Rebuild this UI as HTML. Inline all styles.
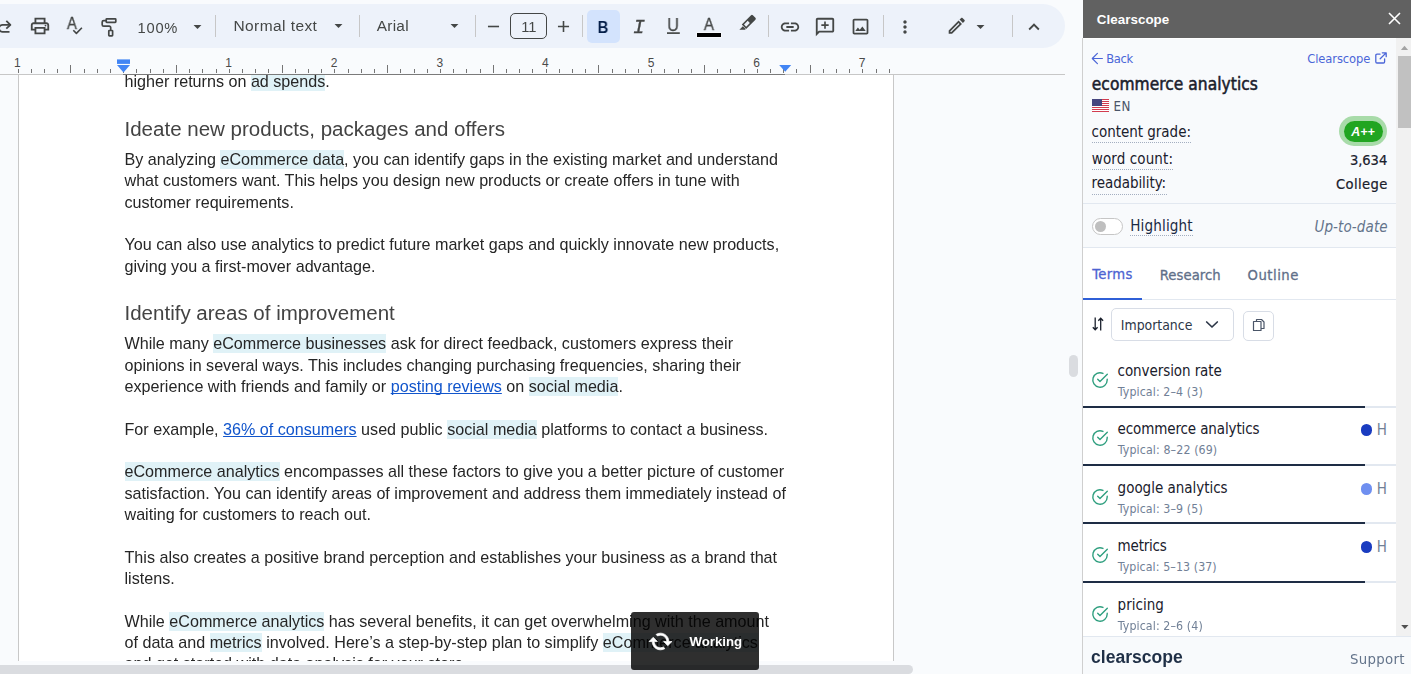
<!DOCTYPE html>
<html lang="en"><head><meta charset="utf-8"><title>Google Docs - Clearscope</title>
<style>
*{box-sizing:border-box;margin:0;padding:0}
html,body{width:1411px;height:674px;overflow:hidden;background:#f9fbfd}
body{position:relative;font-family:"Liberation Sans",Arial,sans-serif;color:#000}
.abs{position:absolute}
.t{position:absolute;white-space:nowrap;line-height:1}
#toolbar{position:absolute;left:-30px;top:4px;width:1095px;height:44px;background:#edf2fa;border-radius:22px}
.ic{position:absolute;width:22px;height:22px;fill:#444746}
.sep{position:absolute;top:15px;width:1px;height:22px;background:#c7c7c7}
.tb{position:absolute;white-space:nowrap;color:#444746;line-height:20px}
#page{position:absolute;left:18px;top:75px;width:876px;height:586px;background:#fff;border-left:1px solid #c8c8c8;border-right:1px solid #c8c8c8;overflow:hidden}
#doc{position:absolute;left:0;top:0;width:1083px;height:661px;overflow:hidden;will-change:transform}
.ln{position:absolute;left:124.500px;white-space:nowrap;font-size:16.14px;line-height:22px;height:22px;color:#262626;letter-spacing:0}
.hd{position:absolute;left:124.500px;white-space:nowrap;font-size:20.53px;line-height:28px;height:28px;color:#434343}
.hl{background:#e0f2f7;padding-bottom:1px}
.lk{color:#1155cc;text-decoration:underline;text-decoration-thickness:1px;text-underline-offset:1px;text-decoration-skip-ink:none}
#side{position:absolute;left:1083px;top:0;width:328px;height:674px;font-family:"DejaVu Sans Condensed","DejaVu Sans","Liberation Sans",sans-serif;font-stretch:condensed;color:#1a202c}
.bar{position:absolute;left:0;width:313px;height:2px;background:#e2e8f0}
.bar i{position:absolute;left:0;top:0;height:2px;width:282px;background:#1e2d45;display:block}
</style></head>
<body>
<div id="doc">
<div id="page"></div>
<div class="ln" style="top:70.00px">higher returns on <span class="hl">ad spends</span>.</div>
<div class="hd" style="top:115.00px">Ideate new products, packages and offers</div>
<div class="ln" style="top:148.00px">By analyzing <span class="hl">eCommerce data</span>, you can identify gaps in the existing market and understand</div>
<div class="ln" style="top:169.00px">what customers want. This helps you design new products or create offers in tune with</div>
<div class="ln" style="top:191.00px">customer requirements.</div>
<div class="ln" style="top:233.00px">You can also use analytics to predict future market gaps and quickly innovate new products,</div>
<div class="ln" style="top:255.00px">giving you a first-mover advantage.</div>
<div class="hd" style="top:299.00px">Identify areas of improvement</div>
<div class="ln" style="top:332.00px">While many <span class="hl">eCommerce businesses</span> ask for direct feedback, customers express their</div>
<div class="ln" style="top:354.00px">opinions in several ways. This includes changing purchasing frequencies, sharing their</div>
<div class="ln" style="top:375.00px">experience with friends and family or <span class="lk">posting reviews</span> on <span class="hl">social media</span>.</div>
<div class="ln" style="top:418.00px">For example, <span class="lk">36% of consumers</span> used public <span class="hl">social media</span> platforms to contact a business.</div>
<div class="ln" style="top:460.00px"><span class="hl">eCommerce analytics</span> encompasses all these factors to give you a better picture of customer</div>
<div class="ln" style="top:482.00px">satisfaction. You can identify areas of improvement and address them immediately instead of</div>
<div class="ln" style="top:503.00px">waiting for customers to reach out.</div>
<div class="ln" style="top:546.00px">This also creates a positive brand perception and establishes your business as a brand that</div>
<div class="ln" style="top:567.00px">listens.</div>
<div class="ln" style="top:610.00px">While <span class="hl">eCommerce analytics</span> has several benefits, it can get overwhelming with the amount</div>
<div class="ln" style="top:631.00px">of data and <span class="hl">metrics</span> involved. Here’s a step-by-step plan to simplify <span class="hl">eCommerce analytics</span></div>
<div class="ln" style="top:652.00px">and get started with data analysis for your store.</div>
</div>
<div class="abs" style="left:0;top:48px;width:1083px;height:27px;background:#f9fbfd"></div>
<svg class="abs" style="left:0;top:48px" width="1083" height="28" viewBox="0 0 1083 28" shape-rendering="crispEdges"><rect x="0" y="26" width="1065" height="1" fill="#c7c7c7"/><rect x="123" y="26" width="662" height="1" fill="#7a7a7a"/><rect x="18" y="21" width="1" height="4" fill="#757575"/><rect x="31" y="21" width="1" height="4" fill="#757575"/><rect x="44" y="21" width="1" height="4" fill="#757575"/><rect x="57" y="21" width="1" height="4" fill="#757575"/><rect x="70" y="17" width="1" height="8" fill="#757575"/><rect x="84" y="21" width="1" height="4" fill="#757575"/><rect x="97" y="21" width="1" height="4" fill="#757575"/><rect x="110" y="21" width="1" height="4" fill="#757575"/><rect x="123" y="21" width="1" height="4" fill="#757575"/><rect x="136" y="21" width="1" height="4" fill="#757575"/><rect x="150" y="21" width="1" height="4" fill="#757575"/><rect x="163" y="21" width="1" height="4" fill="#757575"/><rect x="176" y="17" width="1" height="8" fill="#757575"/><rect x="189" y="21" width="1" height="4" fill="#757575"/><rect x="202" y="21" width="1" height="4" fill="#757575"/><rect x="216" y="21" width="1" height="4" fill="#757575"/><rect x="229" y="21" width="1" height="4" fill="#757575"/><rect x="242" y="21" width="1" height="4" fill="#757575"/><rect x="255" y="21" width="1" height="4" fill="#757575"/><rect x="268" y="21" width="1" height="4" fill="#757575"/><rect x="282" y="17" width="1" height="8" fill="#757575"/><rect x="295" y="21" width="1" height="4" fill="#757575"/><rect x="308" y="21" width="1" height="4" fill="#757575"/><rect x="321" y="21" width="1" height="4" fill="#757575"/><rect x="334" y="21" width="1" height="4" fill="#757575"/><rect x="348" y="21" width="1" height="4" fill="#757575"/><rect x="361" y="21" width="1" height="4" fill="#757575"/><rect x="374" y="21" width="1" height="4" fill="#757575"/><rect x="387" y="17" width="1" height="8" fill="#757575"/><rect x="400" y="21" width="1" height="4" fill="#757575"/><rect x="414" y="21" width="1" height="4" fill="#757575"/><rect x="427" y="21" width="1" height="4" fill="#757575"/><rect x="440" y="21" width="1" height="4" fill="#757575"/><rect x="453" y="21" width="1" height="4" fill="#757575"/><rect x="466" y="21" width="1" height="4" fill="#757575"/><rect x="480" y="21" width="1" height="4" fill="#757575"/><rect x="493" y="17" width="1" height="8" fill="#757575"/><rect x="506" y="21" width="1" height="4" fill="#757575"/><rect x="519" y="21" width="1" height="4" fill="#757575"/><rect x="532" y="21" width="1" height="4" fill="#757575"/><rect x="546" y="21" width="1" height="4" fill="#757575"/><rect x="559" y="21" width="1" height="4" fill="#757575"/><rect x="572" y="21" width="1" height="4" fill="#757575"/><rect x="585" y="21" width="1" height="4" fill="#757575"/><rect x="598" y="17" width="1" height="8" fill="#757575"/><rect x="612" y="21" width="1" height="4" fill="#757575"/><rect x="625" y="21" width="1" height="4" fill="#757575"/><rect x="638" y="21" width="1" height="4" fill="#757575"/><rect x="651" y="21" width="1" height="4" fill="#757575"/><rect x="664" y="21" width="1" height="4" fill="#757575"/><rect x="678" y="21" width="1" height="4" fill="#757575"/><rect x="691" y="21" width="1" height="4" fill="#757575"/><rect x="704" y="17" width="1" height="8" fill="#757575"/><rect x="717" y="21" width="1" height="4" fill="#757575"/><rect x="730" y="21" width="1" height="4" fill="#757575"/><rect x="744" y="21" width="1" height="4" fill="#757575"/><rect x="757" y="21" width="1" height="4" fill="#757575"/><rect x="770" y="21" width="1" height="4" fill="#757575"/><rect x="783" y="21" width="1" height="4" fill="#757575"/><rect x="796" y="21" width="1" height="4" fill="#757575"/><rect x="810" y="17" width="1" height="8" fill="#757575"/><rect x="823" y="21" width="1" height="4" fill="#757575"/><rect x="836" y="21" width="1" height="4" fill="#757575"/><rect x="849" y="21" width="1" height="4" fill="#757575"/><rect x="862" y="21" width="1" height="4" fill="#757575"/><rect x="876" y="21" width="1" height="4" fill="#757575"/><rect x="889" y="21" width="1" height="4" fill="#757575"/></svg>
<svg class="abs" style="left:0;top:48px" width="1083" height="28" viewBox="0 0 1083 28"><text x="17.4" y="19" font-family="Liberation Sans,Arial,sans-serif" font-size="12" fill="#4a4a4a" text-anchor="middle">1</text><text x="228.6" y="19" font-family="Liberation Sans,Arial,sans-serif" font-size="12" fill="#4a4a4a" text-anchor="middle">1</text><text x="334.2" y="19" font-family="Liberation Sans,Arial,sans-serif" font-size="12" fill="#4a4a4a" text-anchor="middle">2</text><text x="439.8" y="19" font-family="Liberation Sans,Arial,sans-serif" font-size="12" fill="#4a4a4a" text-anchor="middle">3</text><text x="545.4" y="19" font-family="Liberation Sans,Arial,sans-serif" font-size="12" fill="#4a4a4a" text-anchor="middle">4</text><text x="651.0" y="19" font-family="Liberation Sans,Arial,sans-serif" font-size="12" fill="#4a4a4a" text-anchor="middle">5</text><text x="756.6" y="19" font-family="Liberation Sans,Arial,sans-serif" font-size="12" fill="#4a4a4a" text-anchor="middle">6</text><text x="862.2" y="19" font-family="Liberation Sans,Arial,sans-serif" font-size="12" fill="#4a4a4a" text-anchor="middle">7</text><rect x="117" y="11.400" width="13" height="4.500" fill="#4285f4"/><path d="M117 17.100h13l-6.500 7.400z" fill="#4285f4"/><path d="M779.200 17h12l-6 6.800z" fill="#4285f4"/></svg>
<div class="abs" style="left:0;top:0;width:1083px;height:48px;background:#f9fbfd"></div>
<div id="toolbar"></div>
<svg class="abs" style="left:0;top:0" width="1083" height="52" viewBox="0 0 1083 52" fill="none" stroke="#444746" stroke-width="1.8" stroke-linejoin="round"><path d="M9.500 31.800H2.500a3.500 3.500 0 0 1 0-7H10"/><path d="M6.300 20.900l4.100 3.900-4.100 3.900"/></svg>
<svg class="ic" style="left:29.00px;top:15.20px;width:22.0px;height:22.0px;fill:#444746" viewBox="0 0 24 24"><circle cx="18" cy="11.5" r="1"/><path d="M19 8h-1V3H6v5H5c-1.66 0-3 1.34-3 3v6h4v4h12v-4h4v-6c0-1.66-1.34-3-3-3zM8 5h8v3H8V5zm8 12v2H8v-4h8v2zm2-2v-2H6v2H4v-4c0-.55.45-1 1-1h14c.55 0 1 .45 1 1v4h-2z"/></svg>
<div class="tb" style="left:57.3px;top:13px;width:30px;text-align:center;font-size:16.3px;color:#444746;transform:scaleX(0.90);-webkit-text-stroke:.3px #444746;will-change:transform;">A</div>
<svg class="abs" style="left:0;top:0" width="1083" height="52" viewBox="0 0 1083 52" fill="none" stroke="#444746" stroke-width="1.6" stroke-linejoin="round"><path d="M73.300 30.300l3.100 3.100 5.500-5.600"/></svg>
<svg class="abs" style="left:0;top:0" width="1083" height="52" viewBox="0 0 1083 52" fill="none" stroke="#444746" stroke-width="1.7" stroke-linejoin="round"><rect x="106.200" y="18.800" width="9.600" height="3.600" rx=".6"/><path d="M106.200 20.600h-2.500a1.500 1.500 0 0 0-1.500 1.500v2.600a1.500 1.500 0 0 0 1.500 1.500h5.500a1.500 1.500 0 0 1 1.500 1.500v2.800"/><rect x="108.800" y="30.500" width="3.800" height="5.400" rx=".6"/></svg>
<div class="tb" style="left:137.6px;top:18px;font-size:14.7px;letter-spacing:0.75px;">100%</div>
<svg class="ic" style="left:188.00px;top:17.00px;width:19.0px;height:19.0px;fill:#444746" viewBox="0 0 24 24"><path d="M7 10l5 5 5-5z"/></svg>
<div class="sep" style="left:215px"></div>
<div class="tb" style="left:233.4px;top:16px;font-size:15.5px;letter-spacing:0.43px;">Normal text</div>
<svg class="ic" style="left:329.20px;top:16.20px;width:19.0px;height:19.0px;fill:#444746" viewBox="0 0 24 24"><path d="M7 10l5 5 5-5z"/></svg>
<div class="sep" style="left:359px"></div>
<div class="tb" style="left:376.8px;top:16px;font-size:15.4px;letter-spacing:0.24px;">Arial</div>
<svg class="ic" style="left:445.10px;top:15.70px;width:19.0px;height:19.0px;fill:#444746" viewBox="0 0 24 24"><path d="M7 10l5 5 5-5z"/></svg>
<div class="sep" style="left:475px"></div>
<svg class="ic" style="left:483.50px;top:17.00px;width:19.0px;height:19.0px;fill:#444746" viewBox="0 0 24 24"><path d="M19 13H5v-2h14v2z"/></svg>
<div class="abs" style="left:510px;top:13px;width:37px;height:26px;border:1px solid #444746;border-radius:5px"></div>
<div class="tb" style="left:510.3px;top:17px;font-size:14.7px;width:37px;text-align:center;">11</div>
<svg class="ic" style="left:553.50px;top:17.00px;width:19.0px;height:19.0px;fill:#444746" viewBox="0 0 24 24"><path d="M19 13h-6v6h-2v-6H5v-2h6V5h2v6h6v2z"/></svg>
<div class="sep" style="left:582px"></div>
<div class="abs" style="left:587px;top:10px;width:33px;height:32.500px;background:#d3e3fd;border-radius:5px"></div>
<div class="tb" style="left:588.4px;top:17px;width:30px;text-align:center;font-size:17.3px;color:#041e49;font-weight:700;transform:scaleX(0.86);will-change:transform;">B</div>
<div class="tb" style="left:623.5px;top:18px;width:30px;text-align:center;font-size:20.0px;color:#444746;font-family:'Liberation Mono',monospace;font-style:italic;-webkit-text-stroke:.35px #444746;will-change:transform;">I</div>
<div class="tb" style="left:658.2px;top:15px;width:30px;text-align:center;font-size:17.5px;color:#444746;transform:scaleX(0.93);-webkit-text-stroke:.25px #444746;will-change:transform;">U</div>
<svg class="abs" style="left:0;top:0" width="1083" height="52" viewBox="0 0 1083 52" fill="none" stroke="#444746" stroke-width="1.7" stroke-linejoin="round"><path d="M667 33.100h12.800"/></svg>
<div class="tb" style="left:694.0px;top:14px;width:30px;text-align:center;font-size:16.3px;color:#444746;transform:scaleX(0.92);-webkit-text-stroke:.3px #444746;will-change:transform;">A</div>
<div class="abs" style="left:697px;top:33px;width:24px;height:4px;background:#000;box-shadow:0 0 0 .6px rgba(255,255,255,.9)"></div>
<svg class="abs" style="left:0;top:0" width="1083" height="52" viewBox="0 0 1083 52" fill="#444746"><g transform="translate(748.200 22.500) rotate(45)"><path d="M-1.800-8.400h3.600a1.300 1.300 0 0 1 1.300 1.300V6h-6.200V-7.100a1.300 1.300 0 0 1 1.300-1.300z"/><rect x="-1.500" y="-.8" width="3" height="5.200" fill="#edf2fa"/></g><path d="M739.400 29.700l3.400-3.500 2.900 2.900-.6.600z"/></svg>
<div class="sep" style="left:768px"></div>
<svg class="ic" style="left:779.00px;top:15.80px;width:22.0px;height:22.0px;fill:#444746" viewBox="0 0 24 24"><path d="M3.9 12c0-1.71 1.39-3.1 3.1-3.1h4V7H7c-2.76 0-5 2.24-5 5s2.24 5 5 5h4v-1.9H7c-1.71 0-3.1-1.39-3.1-3.1zM8 13h8v-2H8v2zm9-6h-4v1.9h4c1.71 0 3.1 1.39 3.1 3.1s-1.39 3.1-3.1 3.1h-4V17h4c2.76 0 5-2.24 5-5s-2.24-5-5-5z"/></svg>
<svg class="ic" style="left:814.00px;top:15.50px;width:22.0px;height:22.0px;fill:#444746" viewBox="0 0 24 24"><path d="M2 4c0-1.1.9-2 2-2h16c1.1 0 2 .9 2 2v12c0 1.1-.9 2-2 2H6l-4 4V4zm2 13.17L5.170 16H20V4H4v13.170zM11.100 6h1.800v3.100H16v1.800h-3.100V14h-1.800v-3.100H8V9.100h3.100z"/></svg>
<svg class="ic" style="left:850.10px;top:15.70px;width:21.0px;height:21.0px;fill:#444746" viewBox="0 0 24 24"><path d="M19 5v14H5V5h14m0-2H5c-1.1 0-2 .9-2 2v14c0 1.1.9 2 2 2h14c1.100 0 2-.9 2-2V5c0-1.1-.9-2-2-2zm-4.860 8.860l-3 3.870L9 13.140 6 17h12l-3.860-5.140z"/></svg>
<div class="sep" style="left:883px"></div>
<svg class="ic" style="left:895.40px;top:16.90px;width:20.0px;height:20.0px;fill:#444746" viewBox="0 0 24 24"><path d="M12 8c1.1 0 2-.9 2-2s-.9-2-2-2-2 .9-2 2 .9 2 2 2zm0 2c-1.1 0-2 .9-2 2s.9 2 2 2 2-.9 2-2-.9-2-2-2zm0 6c-1.1 0-2 .9-2 2s.9 2 2 2 2-.9 2-2-.9-2-2-2z"/></svg>
<svg class="ic" style="left:946.05px;top:15.45px;width:21.5px;height:21.5px;fill:#444746" viewBox="0 0 24 24"><path d="M14.06 9.02l.92.92L5.920 19H5v-.92l9.060-9.060M17.660 3c-.25 0-.51.1-.7.29l-1.830 1.830 3.750 3.750 1.830-1.830c.39-.39.39-1.020 0-1.410l-2.340-2.340c-.2-.2-.45-.29-.71-.29zm-3.600 3.190L3 17.250V21h3.750L17.810 9.940l-3.750-3.750z"/></svg>
<svg class="ic" style="left:970.50px;top:16.70px;width:19.0px;height:19.0px;fill:#444746" viewBox="0 0 24 24"><path d="M7 10l5 5 5-5z"/></svg>
<div class="sep" style="left:1012px"></div>
<svg class="ic" style="left:1023.00px;top:15.50px;width:22.0px;height:22.0px;fill:#444746" viewBox="0 0 24 24"><path d="M12 8l-6 6 1.410 1.410L12 10.830l4.590 4.580L18 14z"/></svg>
<div class="abs" style="left:1069px;top:354.500px;width:9px;height:22px;border-radius:5px;background:#dadce0"></div>
<div class="abs" style="left:0;top:661px;width:1083px;height:13px;background:#f9fbfd"></div>
<div class="abs" style="left:-10px;top:665px;width:923px;height:9px;border-radius:4.500px;background:#dadce0"></div>
<div class="abs" style="left:631px;top:612px;width:128px;height:58px;border-radius:3px;background:rgba(0,0,0,.815)"></div>
<svg class="abs" style="left:648.150px;top:628.900px;width:25px;height:25px;fill:#fff" viewBox="0 0 24 24"><g transform="rotate(90 12 12) translate(24 0) scale(-1 1)" stroke="#fff" stroke-width=".7"><path d="M12 4V1L8 5l4 4V6c3.310 0 6 2.690 6 6 0 1.010-.25 1.970-.7 2.800l1.460 1.460C19.540 15.030 20 13.570 20 12c0-4.420-3.580-8-8-8zm0 14c-3.310 0-6-2.690-6-6 0-1.010.25-1.970.7-2.800L5.240 7.740C4.460 8.970 4 10.430 4 12c0 4.420 3.580 8 8 8v3l4-4-4-4v3z"/></g></svg>
<div class="t" style="left:689.500px;top:634px;font-size:13.200px;line-height:16px;font-weight:700;color:#fff">Working</div>
<div id="side">
<div class="abs" style="left:0;top:0;width:328px;height:38px;background:#616161"></div>
<div class="t" style="top:10px;font-size:13.4px;line-height:20px;color:#fff;font-family:'Liberation Sans',Arial,sans-serif;font-weight:700;letter-spacing:0.03px;left:13.8px;">Clearscope</div>
<svg class="abs" style="left:304.500px;top:12px" width="13" height="13" viewBox="0 0 13 13"><path d="M1 1l11 11M12 1L1 12" stroke="#fff" stroke-width="1.600" fill="none"/></svg>
<div class="abs" style="left:-1px;top:38px;width:1px;height:636px;background:#cfcfcf"></div>
<div class="abs" style="left:0;top:38px;width:313px;height:209px;background:#f8fafc;border-top:1px solid #fff"></div>
<div class="abs" style="left:0;top:247px;width:313px;height:390px;background:#fff"></div>
<div class="abs" style="left:313px;top:38px;width:15px;height:599px;background:#f1f1f1"></div>
<div class="abs" style="left:315px;top:56px;width:13px;height:72px;background:#c1c1c1"></div>
<svg class="abs" style="left:313px;top:38px" width="15" height="15" viewBox="0 0 15 15"><path d="M4.900 12h7.200l-3.600-4.200z" fill="#a3a3a3"/></svg>
<svg class="abs" style="left:313px;top:620px" width="15" height="15" viewBox="0 0 15 15"><path d="M5.200 5h7.300l-3.650 4z" fill="#505050"/></svg>
<svg class="abs" style="left:8px;top:52px" width="13" height="13" viewBox="0 0 13 13" fill="none" stroke="#4b66d8" stroke-width="1.200" stroke-linecap="round" stroke-linejoin="round"><path d="M11.400 6.500H1.600M6.400 1.400L1.300 6.500l5.100 5.100"/></svg>
<div class="t" style="top:49px;font-size:12.8px;line-height:20px;color:#4b66d8;letter-spacing:-0.34px;left:23.3px;">Back</div>
<div class="t" style="top:49px;font-size:12.8px;line-height:20px;color:#4b66d8;letter-spacing:-0.09px;right:40.8px;">Clearscope</div>
<svg class="abs" style="left:291.500px;top:51.500px" width="12" height="12" viewBox="0 0 12 12" fill="none" stroke="#4b66d8" stroke-width="1.300" stroke-linecap="round" stroke-linejoin="round"><path d="M9.600 6.800v3a1.200 1.200 0 0 1-1.200 1.200H2a1.200 1.200 0 0 1-1.200-1.200V3.400A1.200 1.200 0 0 1 2 2.200h3M7.300.8h3.900v3.900M5.200 6.800L11.100.9"/></svg>
<div class="t" style="top:74px;font-size:17.2px;line-height:20px;color:#1a202c;letter-spacing:0.05px;-webkit-text-stroke:0.50px #1a202c;left:8.8px;">ecommerce analytics</div>
<svg class="abs" style="left:9px;top:99px" width="17" height="13" viewBox="0 0 17 13"><rect width="17" height="13" fill="#fff"/><g fill="#d23c4f"><rect y="0" width="17" height="1"/><rect y="2" width="17" height="1"/><rect y="4" width="17" height="1"/><rect y="6" width="17" height="1"/><rect y="8" width="17" height="1"/><rect y="10" width="17" height="1"/><rect y="12" width="17" height="1"/></g><rect width="10" height="7" fill="#46467f"/></svg>
<div class="t" style="top:97px;font-size:13.2px;line-height:20px;color:#4a5568;letter-spacing:0.31px;left:30.6px;">EN</div>
<div class="t" style="top:122px;font-size:15.0px;line-height:20px;color:#1a202c;letter-spacing:-0.03px;left:8.6px;">content grade:</div>
<div class="abs" style="left:9.0px;top:142px;width:99.0px;height:0;border-top:1px dotted #a3aec0"></div>
<div class="t" style="top:149px;font-size:15.0px;line-height:20px;color:#1a202c;letter-spacing:0.11px;left:8.8px;">word count:</div>
<div class="abs" style="left:9.0px;top:169px;width:81.0px;height:0;border-top:1px dotted #a3aec0"></div>
<div class="t" style="top:173px;font-size:15.0px;line-height:20px;color:#1a202c;letter-spacing:-0.05px;left:8.5px;">readability:</div>
<div class="abs" style="left:9.0px;top:194px;width:74.5px;height:0;border-top:1px dotted #a3aec0"></div>
<div class="abs" style="left:256.400px;top:116.200px;width:48px;height:29.500px;border-radius:15px;background:#a8dba9"></div>
<div class="abs" style="left:260.500px;top:121px;width:39.500px;height:21px;border-radius:10.500px;background:#21a521"></div>
<div class="t" style="top:122px;font-size:12.4px;line-height:20px;color:#fff;font-family:'Liberation Sans',Arial,sans-serif;font-weight:700;font-style:italic;letter-spacing:0.05px;left:268.2px;">A++</div>
<div class="t" style="top:150px;font-size:14.6px;line-height:20px;color:#1a202c;letter-spacing:-0.06px;-webkit-text-stroke:0.20px #1a202c;right:23.8px;">3,634</div>
<div class="t" style="top:174px;font-size:14.6px;line-height:20px;color:#1a202c;letter-spacing:0.38px;-webkit-text-stroke:0.20px #1a202c;right:23.3px;">College</div>
<div class="abs" style="left:0;top:203px;width:313px;height:1px;background:#e2e8f0"></div>
<div class="abs" style="left:9px;top:218px;width:31px;height:17px;border-radius:9px;background:#fff;border:1px solid #c6c6c6"></div>
<div class="abs" style="left:12px;top:221px;width:11.400px;height:11.400px;border-radius:6px;background:#bfbfbf"></div>
<div class="t" style="top:216px;font-size:15.1px;line-height:20px;color:#1a2a44;letter-spacing:0.14px;left:47.2px;">Highlight</div>
<div class="abs" style="left:47.0px;top:235px;width:63.0px;height:0;border-top:1px dotted #a3aec0"></div>
<div class="t" style="top:217px;font-size:15.0px;line-height:20px;color:#64748b;font-style:italic;letter-spacing:0.11px;right:23.3px;">Up-to-date</div>
<div class="abs" style="left:0;top:247px;width:313px;height:1px;background:#e2e8f0"></div>
<div class="t" style="top:264px;font-size:14.7px;line-height:20px;color:#4c63d2;letter-spacing:0.39px;-webkit-text-stroke:0.30px #4c63d2;left:9.2px;">Terms</div>
<div class="t" style="top:265px;font-size:14.7px;line-height:20px;color:#5f6f89;letter-spacing:0.05px;-webkit-text-stroke:0.30px #5f6f89;left:76.8px;">Research</div>
<div class="t" style="top:265px;font-size:14.7px;line-height:20px;color:#5f6f89;letter-spacing:0.48px;-webkit-text-stroke:0.30px #5f6f89;left:164.6px;">Outline</div>
<div class="abs" style="left:0;top:299px;width:313px;height:1px;background:#e2e8f0"></div>
<div class="abs" style="left:0;top:298px;width:59px;height:2px;background:#2f5fd7"></div>
<svg class="abs" style="left:8.500px;top:317px" width="12" height="14" viewBox="0 0 12 14" fill="none" stroke="#1a202c" stroke-width="1.300"><path d="M3.200.6v12M.8 10.200l2.400 2.600 2.400-2.600M8.700 13.400V1.400M6.300 3.800L8.700 1.200l2.400 2.600"/></svg>
<div class="abs" style="left:28px;top:308px;width:123px;height:33px;border:1px solid #d8dde6;border-radius:5px;background:#fff"></div>
<div class="t" style="top:315px;font-size:13.9px;line-height:20px;color:#2d3748;letter-spacing:-0.01px;left:37.8px;">Importance</div>
<svg class="abs" style="left:122px;top:320px" width="14" height="10" viewBox="0 0 14 10" fill="none" stroke="#2d3748" stroke-width="1.700" stroke-linecap="round" stroke-linejoin="round"><path d="M1.700 2l5.300 5 5.300-5"/></svg>
<div class="abs" style="left:160px;top:310.500px;width:31px;height:30px;border:1px solid #d8dde6;border-radius:5px;background:#fff"></div>
<svg class="abs" style="left:168.500px;top:317.500px" width="14" height="14" viewBox="0 0 14 14" fill="none" stroke="#4a5568" stroke-width="1.200" stroke-linejoin="round"><path d="M4.500 3.500V1.500h5l2.500 2.500v6.500h-3"/><path d="M1.500 3.500h5l2.500 0v9h-7.500z"/></svg>
<svg class="abs" style="left:8.10px;top:370.80px" width="18" height="18" viewBox="0 0 18 18" fill="none" stroke="#2f9f7f" stroke-width="1.400" stroke-linecap="round" stroke-linejoin="round"><path d="M16.200 8.300v.7a7.200 7.200 0 1 1-4.270-6.580"/><path d="M16.300 3.300L9 10.600 6.700 8.300"/></svg>
<div class="t" style="top:361px;font-size:15.0px;line-height:20px;color:#1a202c;letter-spacing:-0.08px;left:34.6px;">conversion rate</div>
<div class="t" style="top:382px;font-size:12.3px;line-height:20px;color:#718096;letter-spacing:0.10px;left:34.8px;">Typical: 2–4 (3)</div>
<div class="bar" style="top:406px"><i></i></div>
<svg class="abs" style="left:8.10px;top:428.80px" width="18" height="18" viewBox="0 0 18 18" fill="none" stroke="#2f9f7f" stroke-width="1.400" stroke-linecap="round" stroke-linejoin="round"><path d="M16.200 8.300v.7a7.200 7.200 0 1 1-4.270-6.580"/><path d="M16.300 3.300L9 10.600 6.700 8.300"/></svg>
<div class="t" style="top:419px;font-size:15.0px;line-height:20px;color:#1a202c;letter-spacing:-0.12px;left:34.6px;">ecommerce analytics</div>
<div class="t" style="top:440px;font-size:12.3px;line-height:20px;color:#718096;letter-spacing:0.11px;left:34.8px;">Typical: 8–22 (69)</div>
<div class="abs" style="left:277.70px;top:424.30px;width:11.500px;height:11.500px;border-radius:6px;background:#1a3cc0"></div>
<div class="t" style="top:420px;font-size:15.0px;line-height:20px;color:#718096;right:24.2px;">H</div>
<div class="bar" style="top:464px"><i></i></div>
<svg class="abs" style="left:8.10px;top:487.80px" width="18" height="18" viewBox="0 0 18 18" fill="none" stroke="#2f9f7f" stroke-width="1.400" stroke-linecap="round" stroke-linejoin="round"><path d="M16.200 8.300v.7a7.200 7.200 0 1 1-4.270-6.580"/><path d="M16.300 3.300L9 10.600 6.700 8.300"/></svg>
<div class="t" style="top:478px;font-size:15.0px;line-height:20px;color:#1a202c;letter-spacing:-0.02px;left:34.6px;">google analytics</div>
<div class="t" style="top:499px;font-size:12.3px;line-height:20px;color:#718096;letter-spacing:0.10px;left:34.8px;">Typical: 3–9 (5)</div>
<div class="abs" style="left:277.70px;top:483.30px;width:11.500px;height:11.500px;border-radius:6px;background:#6f8ff0"></div>
<div class="t" style="top:479px;font-size:15.0px;line-height:20px;color:#718096;right:24.2px;">H</div>
<div class="bar" style="top:522px"><i></i></div>
<svg class="abs" style="left:8.10px;top:545.80px" width="18" height="18" viewBox="0 0 18 18" fill="none" stroke="#2f9f7f" stroke-width="1.400" stroke-linecap="round" stroke-linejoin="round"><path d="M16.200 8.300v.7a7.200 7.200 0 1 1-4.270-6.580"/><path d="M16.300 3.300L9 10.600 6.700 8.300"/></svg>
<div class="t" style="top:536px;font-size:15.0px;line-height:20px;color:#1a202c;letter-spacing:-0.21px;left:34.6px;">metrics</div>
<div class="t" style="top:557px;font-size:12.3px;line-height:20px;color:#718096;letter-spacing:0.08px;left:34.8px;">Typical: 5–13 (37)</div>
<div class="abs" style="left:277.70px;top:541.30px;width:11.500px;height:11.500px;border-radius:6px;background:#1a3cc0"></div>
<div class="t" style="top:537px;font-size:15.0px;line-height:20px;color:#718096;right:24.2px;">H</div>
<div class="bar" style="top:581px"><i></i></div>
<svg class="abs" style="left:8.10px;top:604.80px" width="18" height="18" viewBox="0 0 18 18" fill="none" stroke="#2f9f7f" stroke-width="1.400" stroke-linecap="round" stroke-linejoin="round"><path d="M16.200 8.300v.7a7.200 7.200 0 1 1-4.270-6.580"/><path d="M16.300 3.300L9 10.600 6.700 8.300"/></svg>
<div class="t" style="top:595px;font-size:15.0px;line-height:20px;color:#1a202c;letter-spacing:0.01px;left:34.6px;">pricing</div>
<div class="t" style="top:616px;font-size:12.3px;line-height:20px;color:#718096;letter-spacing:0.10px;left:34.8px;">Typical: 2–6 (4)</div>
<div class="abs" style="left:0;top:636px;width:328px;height:38px;background:#f8fafc;border-top:1px solid #e2e8f0"></div>
<div class="t" style="top:647px;font-size:19.2px;line-height:20px;color:#1f2f46;font-family:'Liberation Sans',Arial,sans-serif;font-weight:700;left:8.3px;transform:scaleX(.915);transform-origin:0 50%;">clearscope</div>
<div class="t" style="top:649px;font-size:14.8px;line-height:20px;color:#64748b;letter-spacing:0.34px;right:6.1px;">Support</div>
</div>
</body></html>
